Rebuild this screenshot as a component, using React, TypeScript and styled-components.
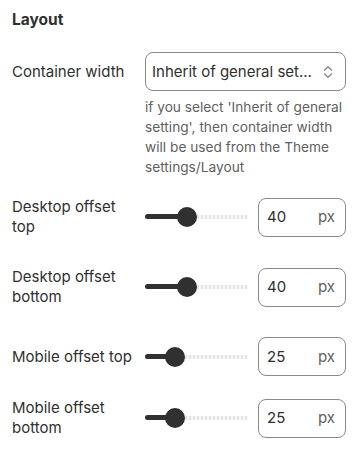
import React from "react";
import styled, { createGlobalStyle } from "styled-components";

const Global = createGlobalStyle`
  html, body { margin: 0; padding: 0; background: #ffffff; }
  body { font-family: Inter, "Noto Sans", sans-serif; color: #303030; }
`;

const Panel = styled.div`
  width: 353px;
  box-sizing: border-box;
  padding: 10px 7px 0 12px;
`;

const Heading = styled.h2`
  margin: 0;
  font-size: 15.5px;
  line-height: 20px;
  font-weight: 650;
  color: #303030;
`;

const Row = styled.div<{ $top: number }>`
  display: grid;
  grid-template-columns: 133px 1fr;
  align-items: center;
  margin-top: ${(p) => p.$top}px;
`;

const Label = styled.div`
  font-size: 15px;
  line-height: 20px;
  color: #303030;
`;

const SelectBox = styled.div`
  height: 39px;
  box-sizing: border-box;
  border: 1px solid #8a8a8a;
  border-radius: 8px;
  display: flex;
  align-items: center;
  padding: 0 11px 0 6px;
  gap: 8px;
`;

const SelectText = styled.span`
  flex: 1;
  font-size: 15px;
  line-height: 20px;
  color: #303030;
  white-space: nowrap;
  overflow: hidden;
`;

const Help = styled.p`
  margin: 6px 0 0 133px;
  font-size: 13.7px;
  line-height: 20px;
  color: #616161;
`;

const Control = styled.div`
  display: flex;
  align-items: center;
  gap: 10px;
`;

const Slider = styled.div`
  position: relative;
  width: 103px;
  height: 20px;
  flex: none;
`;

const TrackRest = styled.div`
  position: absolute;
  left: 0;
  right: 0;
  top: 8px;
  height: 4px;
  border-radius: 2px;
  background: repeating-linear-gradient(
    90deg,
    #e3e3e3 0 2px,
    #f7f7f7 2px 4px
  );
`;

const TrackFill = styled.div`
  position: absolute;
  left: 0;
  top: 7px;
  height: 5px;
  border-radius: 3px;
  background: #303030;
`;

const Thumb = styled.div`
  position: absolute;
  top: 0;
  width: 20px;
  height: 20px;
  border-radius: 50%;
  background: #303030;
`;

const NumberBox = styled.div`
  width: 88px;
  height: 39px;
  box-sizing: border-box;
  border: 1px solid #8a8a8a;
  border-radius: 8px;
  display: flex;
  align-items: center;
  justify-content: space-between;
  padding: 0 10px 0 8px;
  font-size: 15px;
  line-height: 20px;
`;

const Value = styled.span`
  color: #303030;
`;

const Suffix = styled.span`
  color: #616161;
`;

const Chevrons = () => (
  <svg width="12" height="14" viewBox="0 0 12 14" fill="none">
    <path d="M2.5 5L6 1.8L9.5 5" stroke="#8a8a8a" strokeWidth="1.4" strokeLinecap="round" strokeLinejoin="round" />
    <path d="M2.5 9L6 12.2L9.5 9" stroke="#8a8a8a" strokeWidth="1.4" strokeLinecap="round" strokeLinejoin="round" />
  </svg>
);

const RangeField = ({ value }: { value: number }) => {
  const left = value * 0.8;
  return (
    <Control>
      <Slider>
        <TrackRest />
        <TrackFill style={{ width: left + 10 }} />
        <Thumb style={{ left }} />
      </Slider>
      <NumberBox>
        <Value>{value}</Value>
        <Suffix>px</Suffix>
      </NumberBox>
    </Control>
  );
};

const rows = [
  { lines: ["Desktop offset", "top"], value: 40, top: 20 },
  { lines: ["Desktop offset", "bottom"], value: 40, top: 30 },
  { lines: ["Mobile offset top"], value: 25, top: 30 },
  { lines: ["Mobile offset", "bottom"], value: 25, top: 22 },
];

export default function App() {
  return (
    <>
      <Global />
      <Panel>
        <Heading>Layout</Heading>
        <Row $top={22}>
          <Label>Container width</Label>
          <SelectBox>
            <SelectText>Inherit of general set...</SelectText>
            <Chevrons />
          </SelectBox>
        </Row>
        <Help>
          if you select 'Inherit of general setting', then container width will be used from the Theme settings/Layout
        </Help>
        {rows.map((r) => (
          <Row key={r.lines.join(" ")} $top={r.top}>
            <Label>
              {r.lines.map((s) => (
                <div key={s}>{s}</div>
              ))}
            </Label>
            <RangeField value={r.value} />
          </Row>
        ))}
      </Panel>
    </>
  );
}
